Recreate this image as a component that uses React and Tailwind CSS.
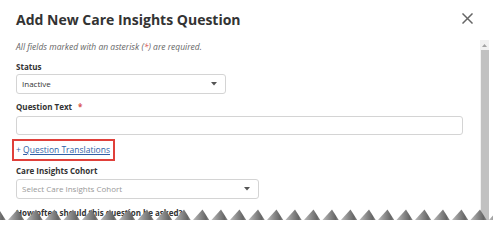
import React from "react";

const font = { fontFamily: '"Open Sans", "Noto Sans", sans-serif' };

function Caret() {
  return (
    <svg width="6" height="4" viewBox="0 0 6 4" className="shrink-0">
      <path d="M0 0 L6 0 L3 3.5 Z" fill="#555" />
    </svg>
  );
}

function Zigzag() {
  const period = 18.5;
  const peaks = [];
  for (let p = 17.5 - period; p < 520; p += period) peaks.push(p);
  return (
    <svg
      className="absolute left-0 top-0 pointer-events-none"
      width="493"
      height="220"
      viewBox="0 0 493 220"
    >
      <defs>
        <linearGradient id="tooth" x1="0" y1="0" x2="1" y2="0">
          <stop offset="0" stopColor="#bdbdbd" />
          <stop offset="0.5" stopColor="#858585" />
          <stop offset="0.8" stopColor="#666666" />
          <stop offset="1" stopColor="#8a8a8a" />
        </linearGradient>
      </defs>
      {peaks.map((p, i) => (
        <polygon
          key={i}
          points={`${p - 10},220.5 ${p},209.5 ${p + 7},220.5`}
          fill="url(#tooth)"
        />
      ))}
    </svg>
  );
}

export default function App() {
  return (
    <div className="relative w-[493px] h-[220px] overflow-hidden bg-white text-[#333]" style={font}>
      {/* Header */}
      <div className="flex items-start justify-between pl-[16px] pr-[20px] pt-[10px] h-[40px]">
        <h1 className="text-[14px] leading-[20px] font-bold text-[#333]">
          Add New Care Insights Question
        </h1>
        <svg width="11" height="11" viewBox="0 0 11 11" className="mt-[3px]">
          <path d="M1 1 L10 10 M10 1 L1 10" stroke="#666" strokeWidth="1.5" strokeLinecap="square" />
        </svg>
      </div>

      {/* Body */}
      <div className="flex h-[180px]">
        <div className="flex-1 pl-[16px] pr-[17px] flex flex-col items-start">
          <p className="text-[8.5px] leading-[14px] italic text-[#666]">
            All fields marked with an asterisk (<span className="text-[#d9534f]">*</span>) are required.
          </p>

          <label className="mt-[6px] text-[8px] leading-[14px] font-bold">Status</label>
          <div className="w-[210px] h-[20px] border border-[#d4d4d4] rounded-[3px] flex items-center justify-between pl-[5px] pr-[8px]">
            <span className="text-[8px] text-[#333]">Inactive</span>
            <Caret />
          </div>

          <label className="mt-[6px] text-[8px] leading-[14px] font-bold">
            Question Text <span className="text-[#d9534f] ml-[4px]">*</span>
          </label>
          <div className="mt-[2px] w-full h-[20px] border border-[#d4d4d4] rounded-[3px]" />

          <div className="mt-[4px] -ml-[4px] w-[103px] h-[23px] border-2 border-[#e0403a] flex items-center pl-[2px]">
            <span className="text-[8.5px] text-[#2f5fa7] whitespace-nowrap">
              + <span className="underline">Question Translations</span>
            </span>
          </div>

          <label className="mt-[3px] text-[8px] leading-[14px] font-bold">Care Insights Cohort</label>
          <div className="mt-[1px] w-[243px] h-[20px] border border-[#d4d4d4] rounded-[3px] flex items-center justify-between pl-[5px] pr-[8px]">
            <span className="text-[8px] text-[#999]">Select Care Insights Cohort</span>
            <Caret />
          </div>

          <label className="mt-[7px] text-[8px] leading-[14px] font-bold">
            How often should this question be asked?
          </label>
        </div>

        {/* Scrollbar */}
        <div className="w-[9px] mr-[4px] bg-[#f1f1f1] flex flex-col items-center">
          <div className="h-[10px] flex items-center justify-center">
            <svg width="5" height="3" viewBox="0 0 5 3">
              <path d="M0 3 L5 3 L2.5 0 Z" fill="#a3a3a3" />
            </svg>
          </div>
          <div className="w-[8px] flex-1 bg-[#c1c1c1]" />
        </div>
      </div>

      <Zigzag />
    </div>
  );
}
